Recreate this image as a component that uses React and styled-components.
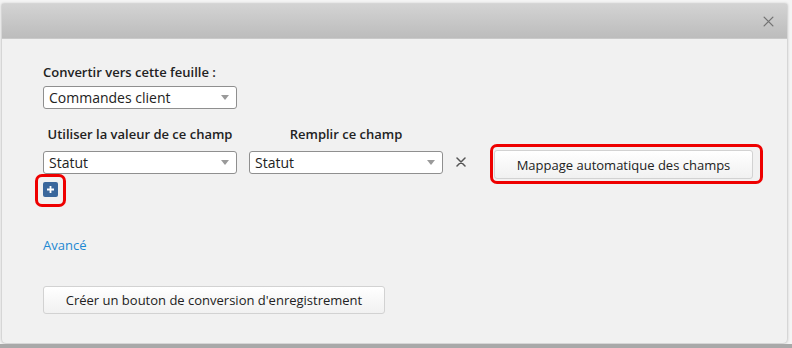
import React from "react";
import styled, { createGlobalStyle } from "styled-components";

const GlobalStyle = createGlobalStyle`
  html, body {
    margin: 0;
    padding: 0;
    background: #f6f6f6;
  }
  body {
    font-family: "Open Sans", "Liberation Sans", sans-serif;
    color: #333;
  }
`;

const Page = styled.div`
  width: 792px;
  height: 348px;
  display: flex;
  flex-direction: column;
  overflow: hidden;
  background: #f4f4f4;
`;

const Dialog = styled.div`
  width: 785px;
  height: 339px;
  margin: 4px 0 0 2px;
  background: #f1f1f1;
  border-radius: 0 0 4px 4px;
  box-shadow: 0 0 3px rgba(0, 0, 0, 0.35);
  display: flex;
  flex-direction: column;
`;

const Header = styled.div`
  height: 34px;
  flex-shrink: 0;
  background: linear-gradient(#d3d3d3, #bcbcbc);
  border-bottom: 1px solid #c9c9c9;
  display: flex;
  align-items: center;
  justify-content: flex-end;
  padding-right: 13px;
`;

const CloseButton = styled.button`
  border: none;
  background: none;
  padding: 0;
  width: 12px;
  height: 12px;
  display: flex;
  align-items: center;
  justify-content: center;
  cursor: pointer;
`;

const Body = styled.div`
  flex: 1;
  padding: 24px 0 0 41px;
`;

const Label = styled.div`
  font-size: 13px;
  font-weight: 600;
  line-height: 18px;
  color: #222;
`;

const SelectBox = styled.div`
  width: 194px;
  height: 23px;
  box-sizing: border-box;
  border: 1px solid #8f8f8f;
  border-radius: 3px;
  background: #fff;
  display: flex;
  align-items: center;
  justify-content: space-between;
  padding: 0 7px 0 5px;
  font-size: 14px;
  color: #222;
  margin-top: ${(p) => p.$mt || 0}px;
`;

const Caret = styled.span`
  width: 0;
  height: 0;
  border-left: 4px solid transparent;
  border-right: 4px solid transparent;
  border-top: 5px solid #9a9a9a;
`;

const ColumnHeads = styled.div`
  display: grid;
  grid-template-columns: 194px 194px;
  column-gap: 12px;
  margin-top: 16px;
`;

const ColumnHead = styled(Label)`
  text-align: center;
`;

const MapRow = styled.div`
  display: flex;
  align-items: flex-start;
  margin-top: 8px;
  height: 22px;
`;

const SelectGap = styled.div`
  width: 12px;
`;

const RemoveButton = styled.button`
  border: none;
  background: none;
  padding: 0;
  margin: 5px 0 0 12px;
  width: 12px;
  height: 12px;
  display: flex;
  align-items: center;
  justify-content: center;
`;

const Highlight = styled.div`
  border: 3px solid #ee0000;
  border-radius: 7px;
  display: inline-flex;
  flex-shrink: 0;
`;

const AutoRing = styled(Highlight)`
  margin: -7px 0 0 23px;
  padding: 3px 7px 2px 1px;
`;

const PlusRing = styled(Highlight)`
  margin: 1px 0 0 -8px;
  padding: 5px 5px 7px 5px;
`;

const Button = styled.button`
  font-family: "Open Sans", "Liberation Sans", sans-serif;
  font-size: 13px;
  color: #222;
  background: linear-gradient(#ffffff, #f1f1f1);
  border: 1px solid #d2d2d2;
  border-radius: 3px;
  width: ${(p) => p.$w}px;
  height: ${(p) => p.$h}px;
  padding: 0;
  cursor: pointer;
`;

const PlusButton = styled.button`
  width: 15px;
  height: 15px;
  padding: 0;
  border: none;
  border-radius: 2px;
  background: #3a679c;
  display: flex;
  align-items: center;
  justify-content: center;
`;

const AdvancedLink = styled.a`
  display: block;
  margin-top: 29px;
  font-size: 13px;
  line-height: 18px;
  color: #1d88d2;
  text-decoration: none;
  width: max-content;
`;

const ConvertButtonWrap = styled.div`
  margin-top: 32px;
`;

const BottomStrip = styled.div`
  flex: 1;
  margin-top: 1px;
  background: #a9a9a9;
`;

const Cross = ({ size, color, width }) => (
  <svg width={size} height={size} viewBox="0 0 10 10">
    <path d="M1 1 L9 9 M9 1 L1 9" stroke={color} strokeWidth={width} strokeLinecap="round" />
  </svg>
);

const Select = ({ value, mt }) => (
  <SelectBox $mt={mt}>
    <span>{value}</span>
    <Caret />
  </SelectBox>
);

export default function App() {
  return (
    <>
      <GlobalStyle />
      <Page>
        <Dialog>
          <Header>
            <CloseButton aria-label="Fermer">
              <Cross size={11} color="#737373" width={1.2} />
            </CloseButton>
          </Header>
          <Body>
            <Label>Convertir vers cette feuille :</Label>
            <Select value="Commandes client" mt={5} />

            <ColumnHeads>
              <ColumnHead>Utiliser la valeur de ce champ</ColumnHead>
              <ColumnHead>Remplir ce champ</ColumnHead>
            </ColumnHeads>

            <MapRow>
              <Select value="Statut" />
              <SelectGap />
              <Select value="Statut" />
              <RemoveButton aria-label="Supprimer">
                <Cross size={10} color="#555" width={1.5} />
              </RemoveButton>
              <AutoRing>
                <Button $w={259} $h={29}>Mappage automatique des champs</Button>
              </AutoRing>
            </MapRow>

            <PlusRing>
              <PlusButton aria-label="Ajouter">
                <svg width="9" height="9" viewBox="0 0 9 9">
                  <path d="M4.5 1 V8 M1 4.5 H8" stroke="#fff" strokeWidth="1.8" />
                </svg>
              </PlusButton>
            </PlusRing>

            <AdvancedLink href="#">Avancé</AdvancedLink>

            <ConvertButtonWrap>
              <Button $w={342} $h={28}>Créer un bouton de conversion d'enregistrement</Button>
            </ConvertButtonWrap>
          </Body>
        </Dialog>
        <BottomStrip />
      </Page>
    </>
  );
}
